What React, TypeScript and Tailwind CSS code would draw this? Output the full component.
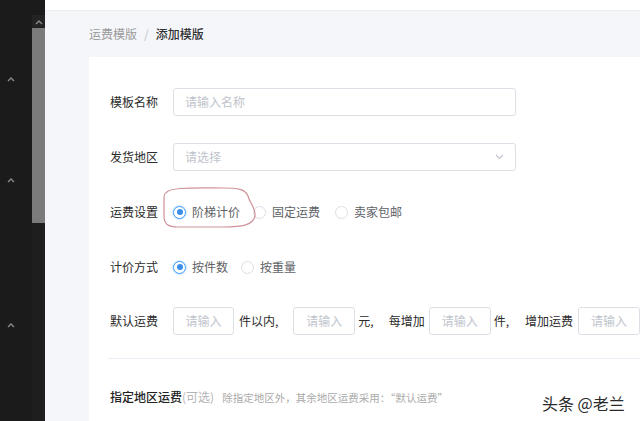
import React from "react";

const FONT = { fontFamily: '"Noto Sans CJK SC", "Noto Sans", sans-serif' };

function Chevron({ className = "" }: { className?: string }) {
  return (
    <svg width="8" height="6" viewBox="0 0 8 6" className={className}>
      <path d="M1 5 L4 2 L7 5" fill="none" stroke="#8a8a8a" strokeWidth="1.4" />
    </svg>
  );
}

function Radio({ checked, label }: { checked?: boolean; label: string }) {
  return (
    <div className="flex items-center">
      <span
        className={
          checked
            ? "w-[13px] h-[13px] rounded-full border border-[#409eff] bg-white flex items-center justify-center shadow-[0_0_0_1px_#d9ecff]"
            : "w-[13px] h-[13px] rounded-full border border-[#dcdfe6] bg-white"
        }
      >
        {checked && <span className="w-[6px] h-[6px] rounded-full bg-[#3a8ee6]" />}
      </span>
      <span className="ml-[6px] text-[12px] text-[#606266]">{label}</span>
    </div>
  );
}

function Input({ placeholder, className = "" }: { placeholder: string; className?: string }) {
  return (
    <div
      className={
        "h-[28px] border border-[#dcdfe6] rounded-[3px] bg-white flex items-center text-[12px] text-[#c0c4cc] shrink-0 " +
        className
      }
    >
      {placeholder}
    </div>
  );
}

function Label({ children }: { children: React.ReactNode }) {
  return <div className="w-[63px] shrink-0 text-[12px] text-[#2b2b2b]">{children}</div>;
}

export default function App() {
  return (
    <div className="flex w-[640px] h-[421px] overflow-hidden" style={FONT}>
      <aside className="w-[45px] shrink-0 bg-[#1b1b1b] flex">
        <div className="w-[32px] flex flex-col items-center">
          <Chevron className="mt-[76px] -ml-[10px]" />
          <Chevron className="mt-[95px] -ml-[10px]" />
          <Chevron className="mt-[139px] -ml-[10px]" />
        </div>
        <div className="w-[13px] flex flex-col bg-[#1e1e1e]">
          <div className="h-[15px] bg-[#1b1b1b]" />
          <div className="h-[13px] bg-[#232323] flex items-center justify-center">
            <Chevron />
          </div>
          <div className="h-[195px] bg-[#7b7b7b]" />
        </div>
      </aside>

      <main className="flex-1 bg-[#f5f6fa] flex flex-col relative">
        <header className="h-[11px] bg-white border-b border-[#eceef3] shrink-0" />
        <div className="h-[46px] shrink-0 pl-[44px] flex items-center text-[12px]">
          <span className="text-[#999]">运费模版</span>
          <span className="mx-[7px] text-[#c0c4cc]">/</span>
          <span className="text-[#303133] font-medium">添加模版</span>
        </div>

        <div className="ml-[44px] flex-1 bg-white pl-[21px] pt-[31px] overflow-hidden">
          <div className="flex items-center h-[28px]">
            <Label>模板名称</Label>
            <Input placeholder="请输入名称" className="w-[343px] pl-[11px]" />
          </div>

          <div className="flex items-center h-[28px] mt-[27px]">
            <Label>发货地区</Label>
            <div className="w-[343px] h-[28px] border border-[#dcdfe6] rounded-[3px] flex items-center justify-between pl-[11px] pr-[11px] text-[12px] text-[#c0c4cc]">
              <span>请选择</span>
              <svg width="9" height="6" viewBox="0 0 9 6">
                <path d="M1 1 L4.5 4.5 L8 1" fill="none" stroke="#c0c4cc" strokeWidth="1.1" />
              </svg>
            </div>
          </div>

          <div className="flex items-center h-[28px] mt-[27px]">
            <Label>运费设置</Label>
            <div className="relative flex items-center">
              <svg
                width="95"
                height="46"
                viewBox="0 0 95 46"
                className="absolute left-[-10px] top-[-19px] pointer-events-none"
              >
                <path
                  d="M3 9 C6 3, 30 4, 60 4 C75 4, 82 5, 85 12 C87 20, 93 24, 92 32 C90 41, 80 43, 60 43 L15 43 C5 43, 1 40, 1 32 L1 15 C1 11, 2 9, 3 9 Z"
                  fill="none"
                  stroke="#cf9197"
                  strokeWidth="1.2"
                />
              </svg>
              <Radio checked label="阶梯计价" />
              <div className="ml-[13px]">
                <Radio label="固定运费" />
              </div>
              <div className="ml-[15px]">
                <Radio label="卖家包邮" />
              </div>
            </div>
          </div>

          <div className="flex items-center h-[28px] mt-[27px]">
            <Label>计价方式</Label>
            <Radio checked label="按件数" />
            <div className="ml-[13px]">
              <Radio label="按重量" />
            </div>
          </div>

          <div className="flex items-center h-[28px] mt-[26px] whitespace-nowrap">
            <Label>默认运费</Label>
            <Input placeholder="请输入" className="w-[61px] justify-center" />
            <span className="ml-[5px] text-[12px] text-[#2b2b2b]">件以内,</span>
            <Input placeholder="请输入" className="w-[62px] justify-center ml-[15px]" />
            <span className="ml-[3px] text-[12px] text-[#2b2b2b]">元,</span>
            <span className="ml-[15px] text-[12px] text-[#2b2b2b]">每增加</span>
            <Input placeholder="请输入" className="w-[62px] justify-center ml-[4px]" />
            <span className="ml-[3px] text-[12px] text-[#2b2b2b]">件,</span>
            <span className="ml-[16px] text-[12px] text-[#2b2b2b]">增加运费</span>
            <Input placeholder="请输入" className="w-[62px] justify-center ml-[5px]" />
          </div>

          <div className="mt-[23px] -ml-[2px] border-t border-[#ebeef5]" />

          <div className="mt-[29px] flex items-baseline whitespace-nowrap">
            <span className="text-[12px] text-[#222] font-medium">指定地区运费</span>
            <span className="text-[12px] text-[#b5b5b5]">(可选)</span>
            <span className="ml-[8px] text-[10.5px] text-[#aaa]">除指定地区外，其余地区运费采用：“默认运费”</span>
          </div>
        </div>

        <div className="absolute left-[497px] top-[391px] text-[16px] text-[#2a2a2a] whitespace-nowrap">
          头条 @老兰
        </div>
      </main>
    </div>
  );
}
